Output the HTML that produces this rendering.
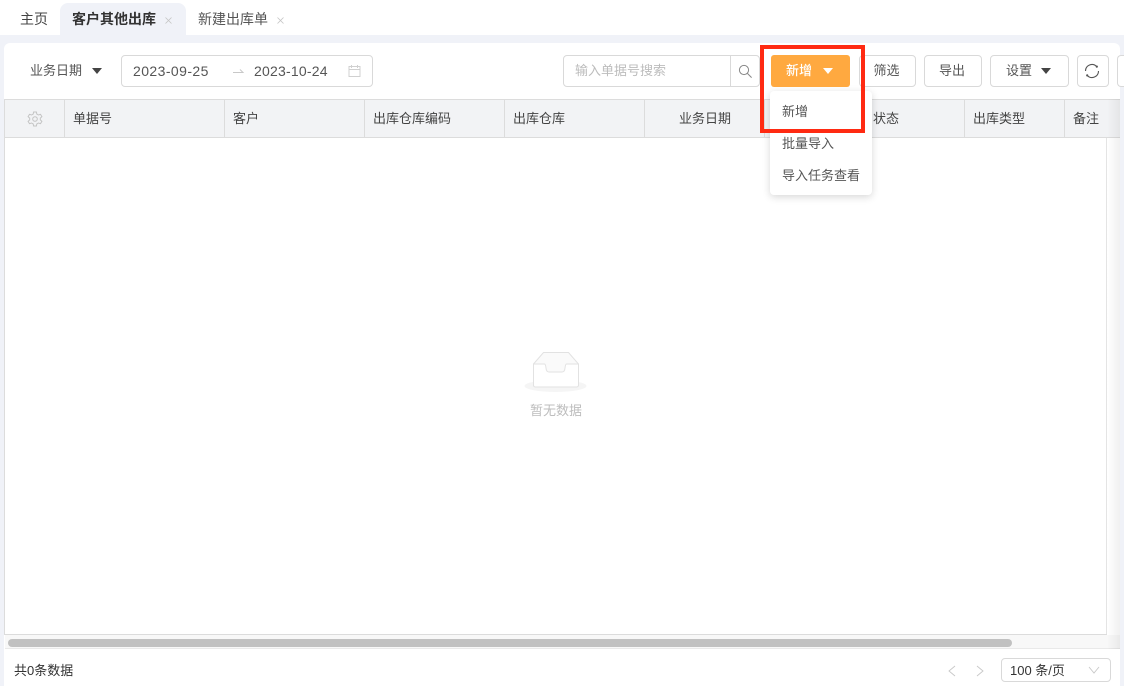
<!DOCTYPE html>
<html lang="zh"><head><meta charset="utf-8"><style>
*{box-sizing:border-box}
html,body{margin:0;padding:0}
body{width:1124px;height:686px;position:relative;overflow:hidden;background:#fff;font-family:"Liberation Sans","Noto Sans CJK SC",sans-serif;font-size:13px;color:#333}
.a{position:absolute;white-space:nowrap}
.t{line-height:18px;height:18px}
.tab{font-size:14px}
.date{font-size:14px;letter-spacing:.42px;color:#555}
.btn{position:absolute;top:55px;height:32px;border:1px solid #d9d9d9;border-radius:4px;background:#fff;text-align:center;line-height:30px;color:#555}
.th{position:absolute;top:100px;height:37px;line-height:37px;padding-left:8px;border-right:1px solid #dcdcdc;color:#444;white-space:nowrap}
</style></head><body>
<div class="a" style="left:0;top:35px;width:1124px;height:651px;background:#f0f2f8"></div>
<div class="a" style="left:60px;top:3px;width:126px;height:32px;background:#f0f2f8;border-radius:8px 8px 0 0"></div>
<div class="a t tab" style="left:20px;top:10px;color:#444">主页</div>
<div class="a t tab" style="left:72px;top:10px;font-weight:700;color:#333">客户其他出库</div>
<svg class="a" style="left:165px;top:17px" width="7" height="7" viewBox="0 0 7 7" fill="none" stroke="#c4c4c4" stroke-width=".8"><path d="M.5.5l6 6M6.500.5l-6 6"/></svg>
<div class="a t tab" style="left:198px;top:10px;color:#555">新建出库单</div>
<svg class="a" style="left:277px;top:17px" width="7" height="7" viewBox="0 0 7 7" fill="none" stroke="#c4c4c4" stroke-width=".8"><path d="M.5.5l6 6M6.500.5l-6 6"/></svg>

<div class="a" style="left:4px;top:43px;width:1116px;height:643px;background:#fff;border-radius:6px 6px 0 0"></div>

<div class="a t" style="left:30px;top:62px;color:#555">业务日期</div>
<div class="a" style="left:92px;top:68px;width:0;height:0;border-left:5px solid transparent;border-right:5px solid transparent;border-top:6px solid #444"></div>
<div class="a" style="left:121px;top:55px;width:252px;height:32px;border:1px solid #d9d9d9;border-radius:4px"></div>
<div class="a t date" style="left:133px;top:62px">2023-09-25</div>
<svg class="a" style="left:232px;top:68px" width="13" height="6" viewBox="0 0 13 6" fill="none" stroke="#c8c8c8"><path d="M1 4.500h10L8 1.500"/></svg>
<div class="a t date" style="left:254px;top:62px;letter-spacing:.22px">2023-10-24</div>
<svg class="a" style="left:348px;top:65px" width="13" height="12" viewBox="0 0 13 12" fill="none" stroke="#d0d0d0"><rect x="1" y="1.500" width="11" height="10"/><path d="M1 4.500h11M3.500 0v3M9.500 0v3"/></svg>

<div class="a" style="left:563px;top:55px;width:197px;height:32px;border:1px solid #d9d9d9;border-radius:4px"></div>
<div class="a" style="left:730px;top:56px;width:1px;height:30px;background:#d9d9d9"></div>
<div class="a t" style="left:575px;top:62px;color:#bcbcbc">输入单据号搜索</div>
<svg class="a" style="left:738px;top:64px" width="15" height="15" viewBox="0 0 15 15" fill="none" stroke="#888" stroke-width="1"><circle cx="6" cy="6" r="4.600"/><path d="M9.400 9.400l4.200 4.200"/></svg>

<div class="btn" style="left:859px;width:57px;padding-right:2px">筛选</div>
<div class="btn" style="left:924px;width:58px;padding-right:2px">导出</div>
<div class="btn" style="left:990px;width:79px;text-align:left;padding-left:15px">设置</div>
<div class="a" style="left:1041px;top:68px;width:0;height:0;border-left:5.500px solid transparent;border-right:5.500px solid transparent;border-top:6px solid #444"></div>
<div class="btn" style="left:1077px;width:32px"></div>
<svg class="a" style="left:1083px;top:62px" width="18" height="18" viewBox="0 0 18 18" fill="none" stroke="#555" stroke-width="1.100"><path d="M2.500 9A6.500 6.500 0 0 1 13.600 4.400M15.500 9A6.500 6.500 0 0 1 4.400 13.600"/><circle cx="13.800" cy="4.600" r="1.100" fill="#555" stroke="none"/><circle cx="4.200" cy="13.400" r="1.100" fill="#555" stroke="none"/></svg>
<div class="a" style="left:1117px;top:55px;width:8px;height:32px;border:1px solid #d9d9d9;border-right:0;border-radius:4px 0 0 4px;background:#fff"></div>

<div class="a" style="left:4px;top:99px;width:1116px;height:39px;background:#f2f3f5;border-top:1px solid #dcdcdc;border-bottom:1px solid #dcdcdc;border-left:1px solid #dcdcdc"></div>
<svg class="a" style="left:27px;top:111px" width="16" height="16" viewBox="0 0 16 16" fill="none" stroke="#c4c4c4" stroke-width="1"><path d="M6.600 1h2.800l.4 2 1.700 1 2-.7 1.400 2.400-1.600 1.400v1.800l1.600 1.400-1.400 2.400-2-.7-1.700 1-.4 2H6.600l-.4-2-1.700-1-2 .7L1.100 10.300l1.600-1.400V7.100L1.100 5.700l1.400-2.400 2 .7 1.700-1z"/><circle cx="8" cy="8" r="2.300"/></svg>
<div class="th" style="left:5px;width:60px"></div>
<div class="th" style="left:65px;width:160px">单据号</div>
<div class="th" style="left:225px;width:140px">客户</div>
<div class="th" style="left:365px;width:140px">出库仓库编码</div>
<div class="th" style="left:505px;width:140px">出库仓库</div>
<div class="th" style="left:645px;width:120px;padding:0 34px;text-align:center">业务日期</div>
<div class="th" style="left:765px;width:200px;padding-left:108px">状态</div>
<div class="th" style="left:965px;width:100px">出库类型</div>
<div class="th" style="left:1065px;width:55px;border-right:0">备注</div>

<div class="a" style="left:4px;top:138px;width:1px;height:497px;background:#dcdcdc"></div>
<div class="a" style="left:1106px;top:138px;width:1px;height:497px;background:#e4e4e4"></div>
<div class="a" style="left:4px;top:634px;width:1103px;height:1px;background:#dcdcdc"></div>
<div class="a" style="left:5px;top:635px;width:1115px;height:14px;background:#f8f8f8;border-bottom:1px solid #e9e9e9"></div>
<div class="a" style="left:8px;top:639px;width:1004px;height:8px;background:#c1c1c1;border-radius:4px"></div>
<div class="a" style="left:1107px;top:99px;width:13px;height:550px;background:linear-gradient(90deg,rgba(0,0,0,0),rgba(0,0,0,.06))"></div>

<svg class="a" style="left:524px;top:350px" width="64" height="42" viewBox="0 0 64 42"><ellipse cx="31.500" cy="36" rx="31" ry="6" fill="#f5f5f5"/><path d="M9.500 14L19.500 2.500h25L54.500 14v21a2 2 0 0 1-2 2h-41a2 2 0 0 1-2-2z" fill="#fafafa" stroke="#e2e2e2"/><path d="M9.500 14h11q1 0 1.500 4 .3 4 3 4h13q2.700 0 3-4 .5-4 1.500-4h12v21a2 2 0 0 1-2 2h-41a2 2 0 0 1-2-2z" fill="#fff" stroke="#e2e2e2"/></svg>
<div class="a t" style="left:530px;top:402px;color:#bdbdbd">暂无数据</div>

<div class="a" style="left:770px;top:91px;width:102px;height:104px;background:#fff;border-radius:4px;box-shadow:0 2px 8px rgba(0,0,0,.16)"></div>
<div class="a t" style="left:782px;top:103px;color:#555">新增</div>
<div class="a t" style="left:782px;top:135px;color:#555">批量导入</div>
<div class="a t" style="left:782px;top:167px;color:#555">导入任务查看</div>

<div class="a" style="left:771px;top:55px;width:79px;height:32px;background:#ffa940;border-radius:3px;color:#fff;font-weight:500;line-height:32px;padding-left:15px">新增</div>
<div class="a" style="left:823px;top:68px;width:0;height:0;border-left:5px solid transparent;border-right:5px solid transparent;border-top:6px solid #fff"></div>

<div class="a" style="left:760px;top:45px;width:105px;height:88px;border:4px solid #ff2a12"></div>

<div class="a" style="left:4px;top:651px;width:1116px;height:35px;background:#fff"></div>
<div class="a t" style="left:14px;top:662px;color:#333">共0条数据</div>
<svg class="a" style="left:946px;top:665px" width="40" height="12" viewBox="0 0 40 12" fill="none" stroke="#c8c8c8" stroke-width=".9"><path d="M9 1L3 6l6 5M31 1l6 5-6 5"/></svg>
<div class="a" style="left:1001px;top:658px;width:110px;height:24px;border:1px solid #d9d9d9;border-radius:4px;line-height:23px;padding-left:8px;color:#333">100 条/页</div>
<svg class="a" style="left:1088px;top:666px" width="12" height="8" viewBox="0 0 12 8" fill="none" stroke="#c8c8c8" stroke-width=".9"><path d="M1 1l5 6 5-6"/></svg>
</body></html>
